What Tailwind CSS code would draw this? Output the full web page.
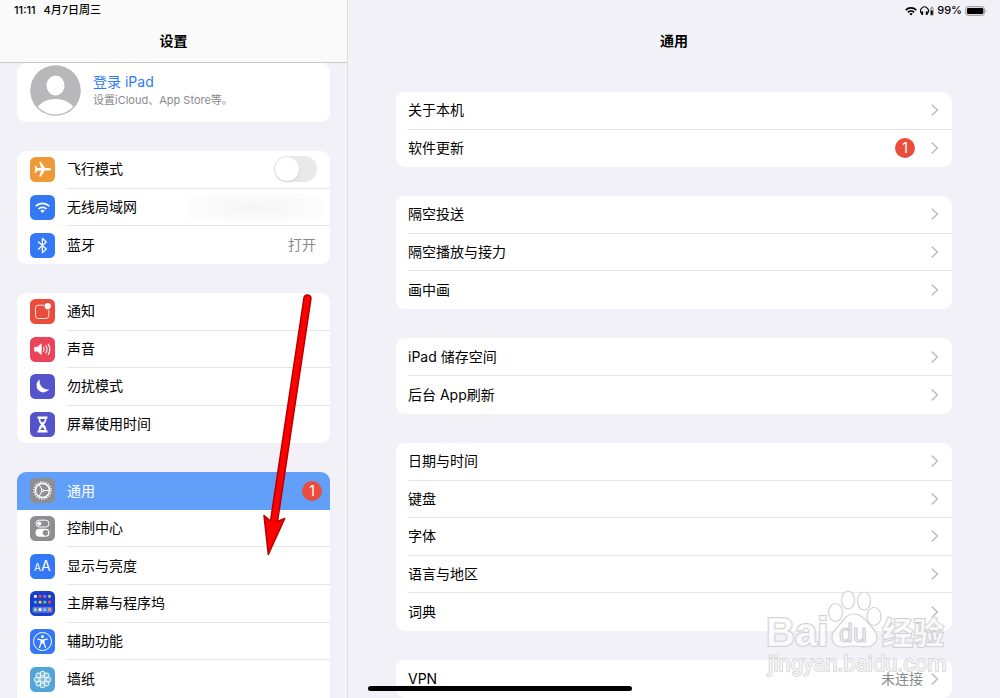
<!DOCTYPE html>
<html lang="zh-CN">
<head>
    <meta charset="UTF-8">
    <meta name="viewport" content="width=device-width, initial-scale=1.0">
    <title>设置</title>
    <script src="https://cdn.jsdelivr.net/npm/@tailwindcss/browser@4"></script>
</head>
<body class="relative h-screen overflow-hidden grid grid-cols-[348fr_652fr] bg-[#f2f1f7] text-black text-sm font-['Inter','Noto_Sans_CJK_SC',sans-serif]">
    <svg class="hidden">
        <symbol id="chevron" viewBox="0 0 8 12"><path d="M1.2 1 L6.4 6 L1.2 11" fill="none" stroke="#bfbfc3" stroke-width="1.6" stroke-linecap="round" stroke-linejoin="round"/></symbol>
    </svg>

    <!-- Sidebar -->
    <aside class="h-screen overflow-hidden border-r border-[#dcdce1] flex flex-col">
        <header class="shrink-0 h-[63px] bg-[#fafafb] border-b border-[#c9c9cd]">
            <div class="h-5 pt-0.5 pl-[14px] flex items-center gap-2 text-[11px] font-medium">
                <span>11:11</span>
                <span>4月7日周三</span>
            </div>
            <h1 class="h-[42px] flex items-center justify-center font-bold">设置</h1>
        </header>

        <nav class="px-[17px] flex flex-col gap-[29px]">
            <a href="#" class="h-[59px] shrink-0 pl-[13px] pb-1 bg-white rounded-[9px] flex items-center gap-3">
                <svg class="w-[51px] h-[51px]" viewBox="0 0 51 51">
                    <clipPath id="avatar"><circle cx="25.5" cy="25.5" r="24"/></clipPath>
                    <circle cx="25.500" cy="25.500" r="25.300" fill="#b8b8bb"/>
                    <ellipse cx="25.500" cy="20.500" rx="9" ry="10" fill="#fff"/>
                    <ellipse cx="25.500" cy="46.500" rx="19" ry="12.500" fill="#fff" clip-path="url(#avatar)"/>
                </svg>
                <div class="pb-0.5">
                    <div class="text-sm leading-5 text-[#2f79f6]">登录 iPad</div>
                    <div class="text-[11px] leading-4 text-[#8a8a8e]">设置iCloud、App Store等。</div>
                </div>
            </a>

            <!-- Connectivity -->
            <div class="h-[113px] shrink-0 grid auto-rows-fr bg-white rounded-[9px]">
                <div class="pl-[13px] flex items-center gap-3">
                    <svg class="w-[25px] h-[25px]" viewBox="0 0 25 25">
                        <rect width="25" height="25" rx="5.500" fill="#f09a37"/>
                        <path d="M21 12.300c0 .8-1.200 1.300-2.400 1.300h-3.700l-4 6h-1.700l2-6H7.500l-1.700 2.200H4.600l.8-3.500-.8-3.500h1.200l1.700 2.200h3.700l-2-6h1.700l4 6h3.700c1.200 0 2.400.5 2.400 1.300z" fill="#fff"/>
                    </svg>
                    <div class="flex-1 h-full pr-[13px] flex items-center border-b border-[#e5e5e8]">
                        <label for="airplane" class="flex-1">飞行模式</label>
                        <input id="airplane" type="checkbox" role="switch" class="appearance-none w-[43px] h-[26px] rounded-full bg-[#e9e9ea] checked:bg-[#34c759] before:block before:w-6 before:h-6 before:m-px before:rounded-full before:bg-white before:shadow checked:before:translate-x-[17px]">
                    </div>
                </div>
                <a href="#" class="pl-[13px] flex items-center gap-3">
                    <svg class="w-[25px] h-[25px]" viewBox="0 0 25 25">
                        <rect width="25" height="25" rx="5.500" fill="#3478f6"/>
                        <g fill="none" stroke="#fff" stroke-width="1.700"><path d="M5.700 11.200a9.800 9.800 0 0 1 13.600 0"/><path d="M8.400 14a5.900 5.900 0 0 1 8.200 0"/></g>
                        <path d="M10.300 15.700a3.200 3.200 0 0 1 4.400 0l-2.200 2.300z" fill="#fff"/>
                    </svg>
                    <div class="flex-1 h-full pr-2 flex items-center justify-between border-b border-[#e5e5e8]">
                        <span>无线局域网</span>
                        <span class="w-[135px] h-7 bg-radial from-[#f5f5f6] to-white"></span>
                    </div>
                </a>
                <a href="#" class="pl-[13px] flex items-center gap-3">
                    <svg class="w-[25px] h-[25px]" viewBox="0 0 25 25">
                        <rect width="25" height="25" rx="5.500" fill="#3478f6"/>
                        <path d="M8.300 8.800l8 7.200-3.900 3.700V5.300l3.900 3.700-8 7.200" fill="none" stroke="#fff" stroke-width="1.200" stroke-linejoin="round" stroke-linecap="round"/>
                    </svg>
                    <div class="flex-1 h-full pr-[14px] flex items-center justify-between">
                        <span>蓝牙</span>
                        <span class="text-[#8a8a8e]">打开</span>
                    </div>
                </a>
            </div>

            <!-- Notifications and screen time -->
            <div class="h-[150px] shrink-0 grid auto-rows-fr bg-white rounded-[9px]">
                <a href="#" class="pl-[13px] flex items-center gap-3">
                    <svg class="w-[25px] h-[25px]" viewBox="0 0 25 25">
                        <rect width="25" height="25" rx="5.500" fill="#eb4d3d"/>
                        <path d="M14 6.200H8.200a2.700 2.700 0 0 0-2.700 2.700v7.900a2.700 2.700 0 0 0 2.700 2.700h7.900a2.700 2.700 0 0 0 2.700-2.700V11" fill="none" stroke="#fff" stroke-opacity=".85" stroke-width="1"/>
                        <circle cx="17.700" cy="7.200" r="3.100" fill="#fff"/>
                    </svg>
                    <div class="flex-1 h-full flex items-center border-b border-[#e5e5e8]">通知</div>
                </a>
                <a href="#" class="pl-[13px] flex items-center gap-3">
                    <svg class="w-[25px] h-[25px]" viewBox="0 0 25 25">
                        <rect width="25" height="25" rx="5.500" fill="#ea445a"/>
                        <path d="M4.500 10.200h2.800l4-3.400v10.800l-4-3.400H4.500z" fill="#fff" stroke="#fff" stroke-width=".6" stroke-linejoin="round"/>
                        <g fill="none" stroke="#fff" stroke-width="1.100" stroke-linecap="round"><path d="M13.600 10.200a4 4 0 0 1 0 4.200"/><path d="M15.900 8.700a7 7 0 0 1 0 7.200"/><path d="M18.300 7.200a10 10 0 0 1 0 10.200"/></g>
                    </svg>
                    <div class="flex-1 h-full flex items-center border-b border-[#e5e5e8]">声音</div>
                </a>
                <a href="#" class="pl-[13px] flex items-center gap-3">
                    <svg class="w-[25px] h-[25px]" viewBox="0 0 25 25">
                        <rect width="25" height="25" rx="5.500" fill="#5654cb"/>
                        <path d="M10 5.500a6.900 6.900 0 1 0 9.300 9.600A7.700 7.700 0 0 1 10 5.500z" fill="#fff"/>
                    </svg>
                    <div class="flex-1 h-full flex items-center border-b border-[#e5e5e8]">勿扰模式</div>
                </a>
                <a href="#" class="pl-[13px] flex items-center gap-3">
                    <svg class="w-[25px] h-[25px]" viewBox="0 0 25 25">
                        <rect width="25" height="25" rx="5.500" fill="#5654cb"/>
                        <path d="M7.500 4.500h10v1.900h-1.100c0 3-.7 4.300-2.700 6.100 2 1.800 2.700 3.100 2.700 6.100h1.100v1.900h-10v-1.900h1.100c0-3 .7-4.300 2.700-6.100-2-1.800-2.700-3.100-2.700-6.100H7.500z" fill="#fff"/>
                        <path d="M10.200 7h4.600c-.2 2-.7 2.600-2.300 4-1.600-1.400-2.100-2-2.300-4zM12.500 14.500l2.200 3.500h-4.400z" fill="#5654cb"/>
                        <path d="M12.500 10v5.500" stroke="#fff" stroke-width=".8"/>
                    </svg>
                    <div class="flex-1 h-full flex items-center">屏幕使用时间</div>
                </a>
            </div>

            <!-- General -->
            <div class="h-[226px] shrink-0 grid auto-rows-fr bg-white rounded-t-[9px] overflow-hidden">
                <a href="#" class="pl-[13px] pr-2 flex items-center gap-3 bg-[#629ff8] text-white" aria-current="page">
                    <svg class="w-[25px] h-[25px]" viewBox="0 0 25 25">
                        <rect width="25" height="25" rx="5.500" fill="#8e8e93"/>
                        <circle cx="12.500" cy="12.500" r="8.500" fill="none" stroke="#fff" stroke-width="1.500" stroke-dasharray="1.300 1.370"/>
                        <circle cx="12.500" cy="12.500" r="7" fill="none" stroke="#fff" stroke-width="1.500"/>
                        <path d="M12.500 12.500h6.500M12.500 12.500l-3.300 5.700M12.500 12.500L9.200 6.800" stroke="#fff" stroke-width="1"/>
                        <circle cx="12.500" cy="12.500" r="1.600" fill="#fff"/><circle cx="12.500" cy="12.500" r=".7" fill="#8e8e93"/>
                    </svg>
                    <span class="flex-1">通用</span>
                    <span class="w-5 h-5 rounded-full bg-[#eb4d3d] flex items-center justify-center">1</span>
                </a>
                <a href="#" class="pl-[13px] flex items-center gap-3">
                    <svg class="w-[25px] h-[25px]" viewBox="0 0 25 25">
                        <rect width="25" height="25" rx="5.500" fill="#8e8e93"/>
                        <rect x="6" y="4.200" width="13" height="6.800" rx="3.400" fill="none" stroke="#fff" stroke-width="1"/>
                        <circle cx="9.300" cy="7.600" r="2.100" fill="#fff"/>
                        <rect x="5.500" y="12.800" width="14" height="8" rx="4" fill="#fff"/>
                        <circle cx="15.500" cy="16.800" r="2.800" fill="#8e8e93"/>
                    </svg>
                    <div class="flex-1 h-full flex items-center border-b border-[#e5e5e8]">控制中心</div>
                </a>
                <a href="#" class="pl-[13px] flex items-center gap-3">
                    <svg class="w-[25px] h-[25px]" viewBox="0 0 25 25">
                        <rect width="25" height="25" rx="5.500" fill="#3478f6"/>
                        <text x="4" y="17" font-size="10" fill="#fff">A</text>
                        <text x="11" y="17" font-size="14" fill="#fff">A</text>
                    </svg>
                    <div class="flex-1 h-full flex items-center border-b border-[#e5e5e8]">显示与亮度</div>
                </a>
                <a href="#" class="pl-[13px] flex items-center gap-3">
                    <svg class="w-[25px] h-[25px]" viewBox="0 0 25 25">
                        <rect width="25" height="25" rx="5.500" fill="#1b3fcb"/>
                        <rect x="2.500" y="15.700" width="20" height="6" rx="1.500" fill="#5c78e0"/>
                        <g fill="#fff">
                            <rect x="4" y="4" width="2.800" height="2.800" rx=".7"/><rect x="8.700" y="4" width="2.800" height="2.800" rx=".7" fill="#ee4b3e"/><rect x="13.400" y="4" width="2.800" height="2.800" rx=".7" fill="#b46be8"/><rect x="18.100" y="4" width="2.800" height="2.800" rx=".7" fill="#c3d24b"/>
                            <rect x="4" y="9.800" width="2.800" height="2.800" rx=".7" fill="#55b6f5"/><rect x="8.700" y="9.800" width="2.800" height="2.800" rx=".7" fill="#f5c83e"/><rect x="13.400" y="9.800" width="2.800" height="2.800" rx=".7" fill="#62d06e"/><rect x="18.100" y="9.800" width="2.800" height="2.800" rx=".7" fill="#ee4b5a"/>
                            <rect x="4" y="17.300" width="2.800" height="2.800" rx=".7" fill="#8af07c"/><rect x="8.700" y="17.300" width="2.800" height="2.800" rx=".7"/><rect x="13.400" y="17.300" width="2.800" height="2.800" rx=".7" fill="#7ccbf8"/><rect x="18.100" y="17.300" width="2.800" height="2.800" rx=".7" fill="#f7a14a"/>
                        </g>
                    </svg>
                    <div class="flex-1 h-full flex items-center border-b border-[#e5e5e8]">主屏幕与程序坞</div>
                </a>
                <a href="#" class="pl-[13px] flex items-center gap-3">
                    <svg class="w-[25px] h-[25px]" viewBox="0 0 25 25">
                        <rect width="25" height="25" rx="5.500" fill="#3478f6"/>
                        <circle cx="12.500" cy="12.500" r="9" fill="none" stroke="#fff" stroke-width="1"/>
                        <circle cx="12.500" cy="7.500" r="1.500" fill="#fff"/>
                        <path d="M7.800 10.200l3.300.7v2.600l-1.500 5M17.200 10.200l-3.300.7v2.600l1.500 5" fill="none" stroke="#fff" stroke-width="1.200" stroke-linecap="round" stroke-linejoin="round"/>
                        <path d="M11 10.500h3v4h-3z" fill="#fff"/>
                    </svg>
                    <div class="flex-1 h-full flex items-center border-b border-[#e5e5e8]">辅助功能</div>
                </a>
                <a href="#" class="pl-[13px] flex items-center gap-3">
                    <svg class="w-[25px] h-[25px]" viewBox="0 0 25 25">
                        <rect width="25" height="25" rx="5.500" fill="#53a5d8"/>
                        <g fill="#fff" fill-opacity=".25" stroke="#fff" stroke-width=".9">
                            <circle cx="12.500" cy="6.700" r="2.500"/><circle cx="16.600" cy="8.400" r="2.500"/><circle cx="18.300" cy="12.500" r="2.500"/><circle cx="16.600" cy="16.600" r="2.500"/>
                            <circle cx="12.500" cy="18.300" r="2.500"/><circle cx="8.400" cy="16.600" r="2.500"/><circle cx="6.700" cy="12.500" r="2.500"/><circle cx="8.400" cy="8.400" r="2.500"/>
                            <circle cx="12.500" cy="12.500" r="2.600"/>
                        </g>
                    </svg>
                    <div class="flex-1 h-full flex items-center">墙纸</div>
                </a>
            </div>
        </nav>
    </aside>

    <!-- Detail pane -->
    <main class="h-screen overflow-hidden flex flex-col">
        <header class="shrink-0 h-[92px]">
            <div class="h-5 pt-0.5 pr-[13px] flex items-center justify-end gap-[3px] text-[11px] font-medium">
                <svg class="w-3 h-[10px]" viewBox="0 0 12 10">
                    <g fill="none" stroke="#000" stroke-width="1.700"><path d="M.7 4.100a7.600 7.600 0 0 1 10.600 0"/><path d="M2.900 6.400a4.500 4.500 0 0 1 6.200 0"/></g>
                    <path d="M4.300 7.700a2.500 2.500 0 0 1 3.400 0L6 9.500z"/>
                </svg>
                <svg class="w-[14px] h-[10px]" viewBox="0 0 14 10">
                    <path d="M1.600 7.500A3.900 3.900 0 1 1 7.400 7.500" fill="none" stroke="#000" stroke-width="1.100"/>
                    <rect x="1.200" y="5.300" width="2" height="3.700" rx=".8"/><rect x="5.800" y="5.300" width="2" height="3.700" rx=".8"/>
                    <rect x="10.300" y="2" width="3" height="7.300" rx=".8" fill="#ccc" stroke="#777" stroke-width=".6"/><rect x="10.800" y="4.500" width="2" height="4.300"/><path d="M11 1.200h1.600" stroke="#555" stroke-width=".8"/>
                </svg>
                <span>99%</span>
                <svg class="w-[22px] h-[10px]" viewBox="0 0 22 10">
                    <rect x=".5" y=".5" width="19" height="9" rx="2.700" fill="#dcdce0" stroke="#a5a5a9"/>
                    <rect x="2" y="2" width="16.300" height="6" rx="1.300"/>
                    <path d="M20.500 3.400v3.200a1.800 1.800 0 0 0 0-3.200z" fill="#a5a5a9"/>
                </svg>
            </div>
            <h2 class="h-[42px] flex items-center justify-center font-bold">通用</h2>
        </header>

        <div class="px-12 flex flex-col gap-[29px]">
            <div class="h-[75px] shrink-0 pl-3 grid auto-rows-fr bg-white rounded-[9px]">
                <a href="#" class="pr-[13px] flex items-center justify-between border-b border-[#e5e5e8]">
                    <span>关于本机</span>
                    <svg class="w-2 h-3"><use href="#chevron"/></svg>
                </a>
                <a href="#" class="pr-[13px] flex items-center gap-4">
                    <span class="flex-1">软件更新</span>
                    <span class="w-5 h-5 rounded-full bg-[#eb4d3d] text-white flex items-center justify-center">1</span>
                    <svg class="w-2 h-3"><use href="#chevron"/></svg>
                </a>
            </div>

            <div class="h-[113px] shrink-0 pl-3 grid auto-rows-fr bg-white rounded-[9px]">
                <a href="#" class="pr-[13px] flex items-center justify-between border-b border-[#e5e5e8]">
                    <span>隔空投送</span>
                    <svg class="w-2 h-3"><use href="#chevron"/></svg>
                </a>
                <a href="#" class="pr-[13px] flex items-center justify-between border-b border-[#e5e5e8]">
                    <span>隔空播放与接力</span>
                    <svg class="w-2 h-3"><use href="#chevron"/></svg>
                </a>
                <a href="#" class="pr-[13px] flex items-center justify-between">
                    <span>画中画</span>
                    <svg class="w-2 h-3"><use href="#chevron"/></svg>
                </a>
            </div>

            <div class="h-[76px] shrink-0 pl-3 grid auto-rows-fr bg-white rounded-[9px]">
                <a href="#" class="pr-[13px] flex items-center justify-between border-b border-[#e5e5e8]">
                    <span>iPad 储存空间</span>
                    <svg class="w-2 h-3"><use href="#chevron"/></svg>
                </a>
                <a href="#" class="pr-[13px] flex items-center justify-between">
                    <span>后台 App刷新</span>
                    <svg class="w-2 h-3"><use href="#chevron"/></svg>
                </a>
            </div>

            <div class="h-[188px] shrink-0 pl-3 grid auto-rows-fr bg-white rounded-[9px]">
                <a href="#" class="pr-[13px] flex items-center justify-between border-b border-[#e5e5e8]">
                    <span>日期与时间</span>
                    <svg class="w-2 h-3"><use href="#chevron"/></svg>
                </a>
                <a href="#" class="pr-[13px] flex items-center justify-between border-b border-[#e5e5e8]">
                    <span>键盘</span>
                    <svg class="w-2 h-3"><use href="#chevron"/></svg>
                </a>
                <a href="#" class="pr-[13px] flex items-center justify-between border-b border-[#e5e5e8]">
                    <span>字体</span>
                    <svg class="w-2 h-3"><use href="#chevron"/></svg>
                </a>
                <a href="#" class="pr-[13px] flex items-center justify-between border-b border-[#e5e5e8]">
                    <span>语言与地区</span>
                    <svg class="w-2 h-3"><use href="#chevron"/></svg>
                </a>
                <a href="#" class="pr-[13px] flex items-center justify-between">
                    <span>词典</span>
                    <svg class="w-2 h-3"><use href="#chevron"/></svg>
                </a>
            </div>

            <div class="h-[38px] shrink-0 pl-3 grid auto-rows-fr bg-white rounded-[9px]">
                <a href="#" class="pr-[13px] flex items-center gap-2">
                    <span class="flex-1">VPN</span>
                    <span class="text-[#8a8a8e]">未连接</span>
                    <svg class="w-2 h-3"><use href="#chevron"/></svg>
                </a>
            </div>
        </div>
    </main>

    <!-- Pointer arrow -->
    <svg class="absolute left-[260px] top-[290px] w-[60px] h-[270px] pointer-events-none" viewBox="260 290 60 270">
        <path d="M304 297.500a3.600 3.600 0 0 1 7 .8L277.500 521.500l7.200-3L268.300 554.500 264 515.500l6.500 5.500z" fill="#fe0000" stroke="#b40000" stroke-width="1.500" stroke-linejoin="round"/>
    </svg>

    <!-- Watermark -->
    <svg class="absolute right-[50px] bottom-[14px] w-[186px] h-[98px] pointer-events-none" viewBox="764 586 186 98" fill="#fff" fill-opacity=".75" stroke="#d2d2d5" stroke-width="1.200">
        <text x="766" y="646" font-family="Liberation Sans" font-size="40" font-weight="700" paint-order="stroke" stroke-width="2">Bai</text>
        <ellipse cx="835.500" cy="612.500" rx="7" ry="9"/>
        <ellipse cx="848" cy="600" rx="6.500" ry="9"/>
        <ellipse cx="864" cy="601" rx="6.500" ry="9"/>
        <ellipse cx="874" cy="616.500" rx="7" ry="9"/>
        <path d="M854 614c-7 0-10 5-13 9-4 5-9 8-9 14 0 7 5 10 10 10 4 0 8-1 12-1s8 1 12 1c6 0 11-4 11-10s-5-9-9-14c-3-4-7-9-14-9z"/>
        <text x="839" y="642" font-family="Liberation Sans" font-size="25" fill="#f3f3f5">du</text>
        <text x="882" y="644" font-family="Noto Sans CJK SC" font-size="31" font-weight="700" paint-order="stroke" stroke-width="2">经验</text>
        <text x="768" y="671" font-family="Roboto" font-size="22" paint-order="stroke" stroke-width="1.500">jingyan.baidu.com</text>
    </svg>

    <!-- Home indicator -->
    <div class="absolute bottom-[7px] left-1/2 -translate-x-1/2 w-[264px] h-[5px] rounded-full bg-black"></div>
</body>
</html>
